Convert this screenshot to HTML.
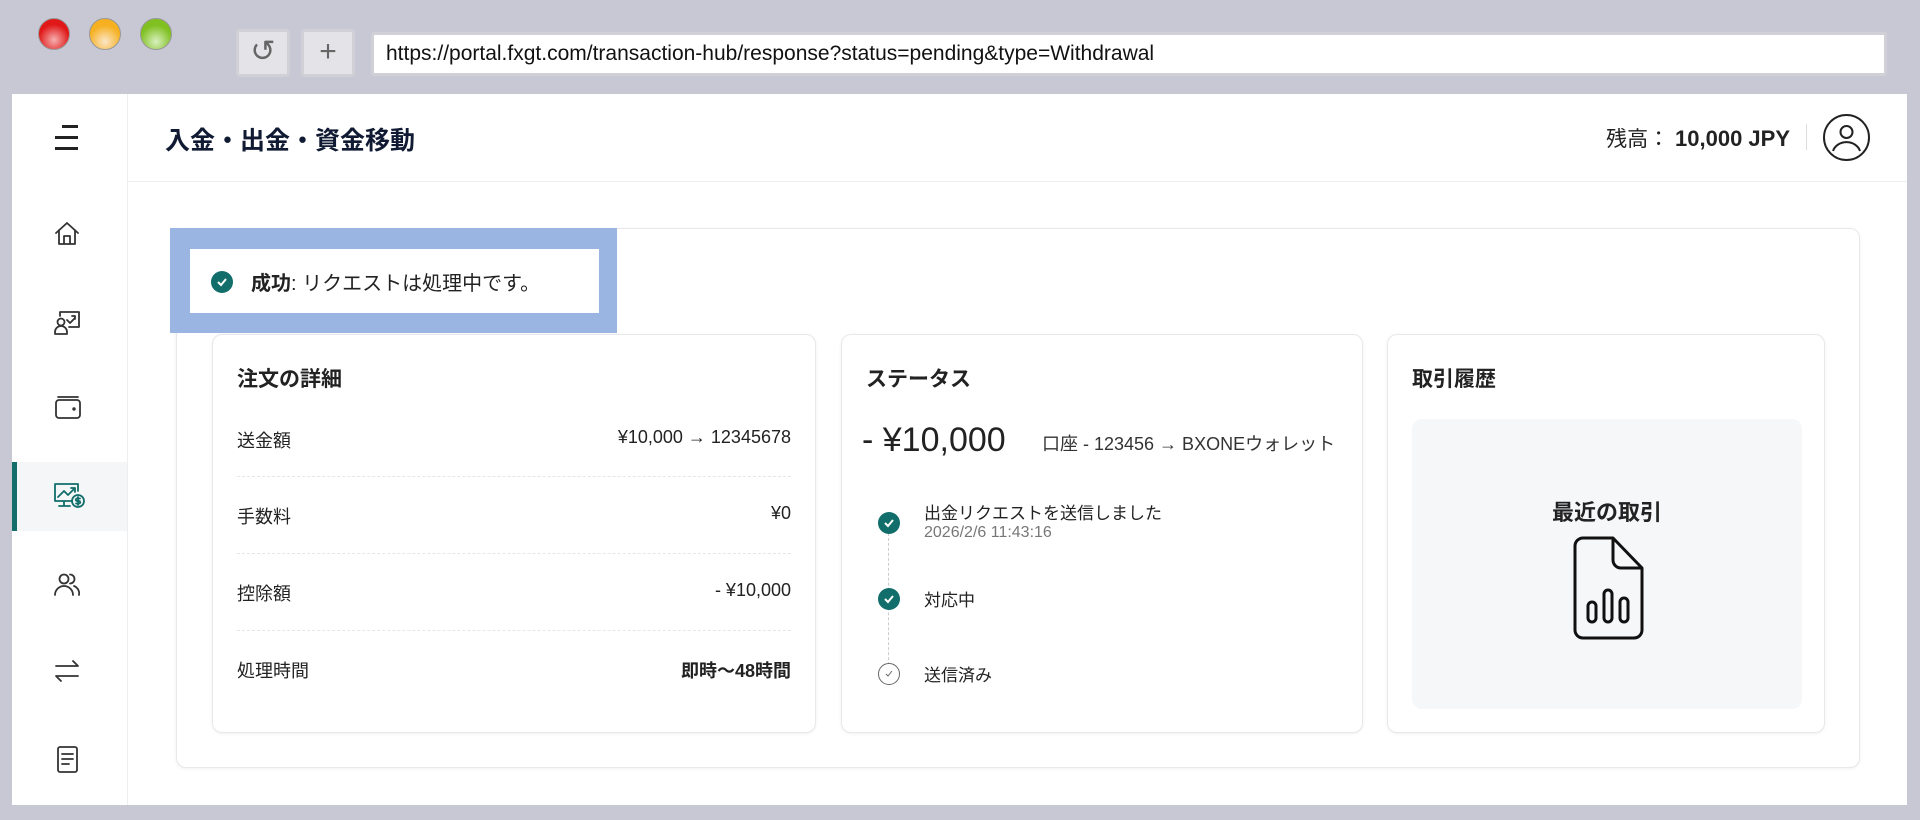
<!DOCTYPE html>
<html><head><meta charset="utf-8"><style>
*{box-sizing:border-box;margin:0;padding:0}
body{width:1920px;height:820px;background:#c8c8d4;font-family:"Liberation Sans","Noto Sans CJK JP",sans-serif;color:#222;position:relative;overflow:hidden}
.a{position:absolute}
.dot{position:absolute;top:18px;width:32px;height:32px;border-radius:50%;border:1px solid #999}
.btn{position:absolute;top:29px;height:48px;width:54px;background:#e4e4e8;border:3px solid #d0d0d6;border-radius:4px;font-size:30px;color:#666;text-align:center;line-height:40px}
.card{position:absolute;background:#fff;border:1px solid #e8e8ec;border-radius:10px;box-shadow:0 1px 3px rgba(0,0,0,.06)}
.t{position:absolute;white-space:nowrap}
.ic{position:absolute;left:52px}
.ic svg{fill:none;stroke:#333;stroke-width:1.8;stroke-linecap:round;stroke-linejoin:round}
.row{position:absolute;left:24px;right:24px;height:1px;border-top:1px dashed #e6e6e6}
.ck{position:absolute;width:22px;height:22px;border-radius:50%;background:#116e6a}
</style></head><body>
<div class="dot" style="left:38px;background:radial-gradient(circle at 50% 70%,#f6b0b0,#e01818 60%)"></div>
<div class="dot" style="left:89px;background:radial-gradient(circle at 50% 75%,#fbe6c8,#f6b020 60%)"></div>
<div class="dot" style="left:140px;background:radial-gradient(circle at 50% 75%,#d8f0c0,#80c020 60%)"></div>
<div class="btn" style="left:236px">↺</div>
<div class="btn" style="left:301px">+</div>
<div class="a" style="left:371px;top:32px;width:1516px;height:44px;background:#fff;border:3px solid #d0d0d6;border-radius:3px;font-size:21px;line-height:38px;padding-left:12px;color:#111">https://portal.fxgt.com/transaction-hub/response?status=pending&amp;type=Withdrawal</div>

<div class="a" style="left:12px;top:94px;width:1895px;height:711px;background:#fff"></div>
<div class="a" style="left:127px;top:94px;width:1px;height:711px;background:#eceef0"></div>
<div class="a" style="left:128px;top:181px;width:1779px;height:1px;background:#eceef0"></div>
<div class="a" style="left:62px;top:125px;width:16px;height:3px;background:#222"></div>
<div class="a" style="left:55px;top:136px;width:23px;height:3px;background:#222"></div>
<div class="a" style="left:55px;top:147px;width:23px;height:3px;background:#222"></div>
<div class="a" style="left:12px;top:462px;width:115px;height:69px;background:#f5f6f8"></div>
<div class="a" style="left:12px;top:462px;width:5px;height:69px;background:#116e6a"></div>
<div class="ic" style="top:219px"><svg width="30" height="30" viewBox="0 0 30 30"><path d="M4 14L15 4l11 10M7 11v14h16V11M12 25v-8h6v8"/></svg></div>
<div class="ic" style="top:307px"><svg width="30" height="30" viewBox="0 0 30 30"><circle cx="9" cy="15" r="3.5"/><path d="M3 27v-2a6 6 0 0 1 12 0v2zM8 9V5h19v15H17M15 13l3 3 5-5M20 9h3v3"/></svg></div>
<div class="ic" style="top:393px"><svg width="30" height="30" viewBox="0 0 30 30"><rect x="4" y="7" width="24" height="18" rx="3"/><path d="M6 4h20"/><circle cx="22" cy="16" r=".8" fill="#333"/></svg></div>
<div class="ic" style="top:480px"><svg width="34" height="32" viewBox="0 0 34 32" style="stroke:#116e6a"><path d="M26 11V4H3v17h17M12 21v5M7 26h11M6 17l6-6 4 4 7-7M19 8h4v4"/><circle cx="26" cy="21" r="6"/><path d="M28 18.5h-3a1.2 1.2 0 0 0 0 2.5h2a1.2 1.2 0 0 1 0 2.5h-3M26 17v8"/></svg></div>
<div class="ic" style="top:569px"><svg width="30" height="30" viewBox="0 0 30 30"><circle cx="12" cy="10" r="4.5"/><path d="M3 26a9 9 0 0 1 18 0M18 5.5a4.5 4.5 0 0 1 0 9M22 17a8 8 0 0 1 5 9"/></svg></div>
<div class="ic" style="top:656px"><svg width="30" height="30" viewBox="0 0 30 30"><path d="M4 10h22l-5-5M26 20H4l5 5"/></svg></div>
<div class="ic" style="top:744px"><svg width="30" height="30" viewBox="0 0 30 30"><rect x="6" y="3" width="19" height="25" rx="2"/><path d="M10 10h11M10 15h11M10 20h7"/></svg></div>

<div class="t" style="left:165px;top:121px;font-size:25px;font-weight:bold;color:#111a33">入金・出金・資金移動</div>
<div class="t" style="right:130px;top:123px;font-size:21px;color:#222">残高： <b style="font-size:22px">10,000 JPY</b></div>
<div class="a" style="left:1806px;top:124px;width:1px;height:26px;background:#ddd"></div>
<div class="a" style="left:1823px;top:114px;width:47px;height:47px;border:2px solid #222;border-radius:50%"><svg width="43" height="43" viewBox="0 0 43 43" style="fill:none;stroke:#222;stroke-width:2"><circle cx="21.5" cy="16" r="6"/><path d="M8 35a14 12 0 0 1 27 0"/></svg></div>

<div class="card" style="left:176px;top:228px;width:1684px;height:540px"></div>
<div class="a" style="left:170px;top:228px;width:447px;height:105px;background:#9bb5e2"></div>
<div class="a" style="left:190px;top:249px;width:409px;height:64px;background:#fff"></div>
<div class="ck" style="left:211px;top:271px"><svg width="22" height="22" viewBox="0 0 22 22"><path d="M7 11l3 3 5-6" stroke="#fff" stroke-width="2" fill="none"/></svg></div>
<div class="t" style="left:251px;top:267px;font-size:20px;color:#222"><b>成功</b>: リクエストは処理中です。</div>

<div class="card" style="left:212px;top:334px;width:604px;height:399px">
<div class="t" style="left:24px;top:28px;font-size:21px;font-weight:bold">注文の詳細</div>
<div class="t" style="left:24px;top:92px;font-size:18px">送金額</div><div class="t" style="right:24px;top:92px;font-size:18px">¥10,000 → 12345678</div>
<div class="row" style="top:141px"></div>
<div class="t" style="left:24px;top:168px;font-size:18px">手数料</div><div class="t" style="right:24px;top:168px;font-size:18px">¥0</div>
<div class="row" style="top:218px"></div>
<div class="t" style="left:24px;top:245px;font-size:18px">控除額</div><div class="t" style="right:24px;top:245px;font-size:18px">- ¥10,000</div>
<div class="row" style="top:295px"></div>
<div class="t" style="left:24px;top:322px;font-size:18px">処理時間</div><div class="t" style="right:24px;top:322px;font-size:18px;font-weight:bold">即時〜48時間</div>
</div>

<div class="card" style="left:841px;top:334px;width:522px;height:399px">
<div class="t" style="left:24px;top:28px;font-size:21px;font-weight:bold">ステータス</div>
<div class="t" style="left:20px;top:86px;font-size:34px">- ¥10,000</div>
<div class="t" style="left:200px;top:95px;font-size:18px;color:#333">口座 - 123456 → BXONEウォレット</div>
<div class="a" style="left:46px;top:198px;height:142px;border-left:1px dashed #ccc"></div>
<div class="ck" style="left:36px;top:177px"><svg width="22" height="22" viewBox="0 0 22 22"><path d="M7 11l3 3 5-6" stroke="#fff" stroke-width="2" fill="none"/></svg></div>
<div class="t" style="left:82px;top:164px;font-size:17px">出金リクエストを送信しました</div>
<div class="t" style="left:82px;top:189px;font-size:16px;color:#777">2026/2/6 11:43:16</div>
<div class="ck" style="left:36px;top:253px"><svg width="22" height="22" viewBox="0 0 22 22"><path d="M7 11l3 3 5-6" stroke="#fff" stroke-width="2" fill="none"/></svg></div>
<div class="t" style="left:82px;top:251px;font-size:17px">対応中</div>
<div class="a" style="left:36px;top:328px;width:22px;height:22px;border-radius:50%;border:1px solid #666;background:#fff"><svg width="20" height="20" viewBox="0 0 20 20"><path d="M7 10l2 2 4-5" stroke="#666" stroke-width="1" fill="none"/></svg></div>
<div class="t" style="left:82px;top:326px;font-size:17px">送信済み</div>
</div>

<div class="card" style="left:1387px;top:334px;width:438px;height:399px">
<div class="t" style="left:24px;top:28px;font-size:21px;font-weight:bold">取引履歴</div>
<div class="a" style="left:24px;top:84px;width:390px;height:290px;background:#f6f7f9;border-radius:10px">
<div class="t" style="left:0;right:0;top:76px;text-align:center;font-size:22px;font-weight:bold">最近の取引</div>
<svg class="a" style="left:157px;top:117px" width="80" height="104" viewBox="0 0 80 104" fill="none" stroke="#111" stroke-width="3" stroke-linejoin="round"><path d="M14 2h30l29 30v62a8 8 0 0 1-8 8H14a8 8 0 0 1-8-8V10a8 8 0 0 1 8-8z"/><path d="M44 2v22a8 8 0 0 0 8 8h21"/><rect x="19" y="66" width="8" height="20" rx="4"/><rect x="35" y="54" width="8" height="32" rx="4"/><rect x="51" y="62" width="8" height="24" rx="4"/></svg>
</div>
</div>
</body></html>
